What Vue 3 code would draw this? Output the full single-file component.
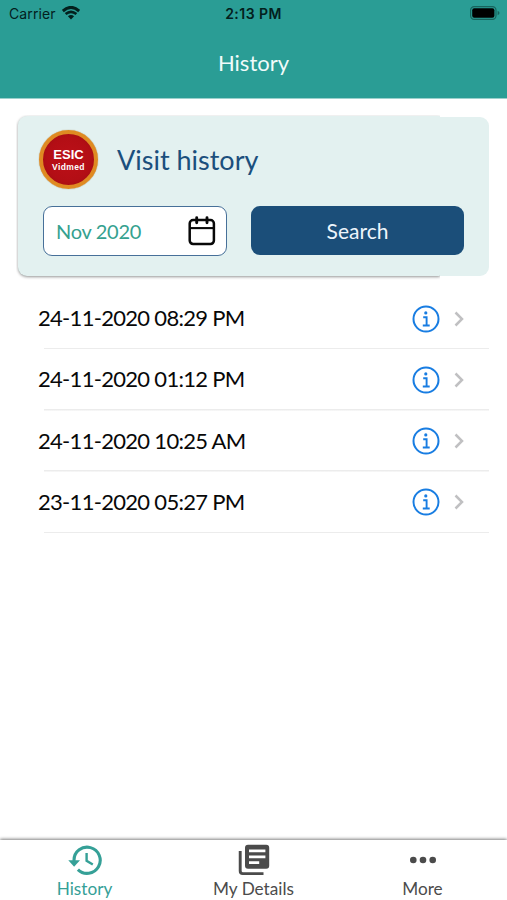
<script setup>
const visits = [
  '24-11-2020 08:29 PM',
  '24-11-2020 01:12 PM',
  '24-11-2020 10:25 AM',
  '23-11-2020 05:27 PM',
]
</script>

<template>
  <div class="screen">
    <header class="top">
      <div class="status">
        <div class="carrier">
          <span>Carrier</span>
          <svg class="wifi" viewBox="0 0 18 14" width="18" height="14">
            <path d="M0.8 5Q9-2.2 17.2 5" fill="none" stroke="#03201d" stroke-width="3" />
            <path d="M3.6 8.1Q9 3.7 14.4 8.1" fill="none" stroke="#03201d" stroke-width="2.6" />
            <path d="M5.9 10.3Q9 7.8 12.1 10.3L9 13.6Z" fill="#03201d" />
          </svg>
        </div>
        <span class="clock">2:13 PM</span>
        <div class="power">
          <svg viewBox="0 0 31 14" width="31" height="14">
            <rect x="0.6" y="0.6" width="25.4" height="12.8" rx="3.6" fill="none" stroke="#17645d" stroke-width="1.2" />
            <rect x="2.2" y="2.2" width="22.2" height="9.6" rx="2" fill="#000" />
            <path d="M27.6 4.7Q29.5 5.5 29.5 7T27.6 9.3Z" fill="#17645d" />
          </svg>
        </div>
      </div>
      <h1>History</h1>
    </header>

    <main>
      <section class="card">
        <div class="heading">
          <div class="logo">
            <span class="esic">ESIC</span>
            <span class="vidmed">Vidmed</span>
          </div>
          <h2>Visit history</h2>
        </div>
        <div class="controls">
          <div class="month">
            <span>Nov 2020</span>
            <svg viewBox="0 0 28 30" width="28" height="30" fill="none" stroke="#080808" stroke-linecap="round">
              <rect x="1.7" y="4.1" width="24.2" height="23.9" rx="3.4" stroke-width="2.5" />
              <path d="M2 12.1H25.6" stroke-width="2.1" stroke-linecap="butt" />
              <path d="M8.7 1.8V6.8M19 1.8V6.8" stroke-width="2.9" />
            </svg>
          </div>
          <button>Search</button>
        </div>
      </section>

      <ul>
        <li v-for="visit in visits" :key="visit">
          <span class="date">{{ visit }}</span>
          <svg class="info" viewBox="0 0 28 28" width="28" height="28" fill="none" stroke="#187de2">
            <circle cx="14" cy="14" r="12.5" stroke-width="2" />
            <circle cx="13.8" cy="7.9" r="1.6" fill="#187de2" stroke="none" />
            <path d="M11.2 12.2H14.6V20.3M10.8 20.5H17.7" stroke-width="1.9" />
          </svg>
          <svg class="chevron" viewBox="0 0 10 16" width="10" height="16">
            <path d="M1.5 1.5L8 8L1.5 14.5" fill="none" stroke="#c0c0c2" stroke-width="2.5" />
          </svg>
        </li>
      </ul>
    </main>

    <nav>
      <a class="active">
        <svg viewBox="0 0 34 32" width="34" height="32">
          <path d="M6 17.5V16.2A13.1 13.1 0 1 1 9.9 25.6" fill="none" stroke="currentColor" stroke-width="3.1" />
          <path d="M0.3 16.2H12L6.1 22.8Z" fill="currentColor" />
          <path d="M18.6 9V16.8L24.8 20.5" fill="none" stroke="currentColor" stroke-width="2.4" />
        </svg>
        <span>History</span>
      </a>
      <a>
        <svg viewBox="0 0 34 32" width="34" height="32">
          <path fill="#4b4b4b" fill-rule="evenodd" d="M11 0.8H29.2Q32.2 0.8 32.2 3.8V21.8Q32.2 24.8 29.2 24.8H11Q8 24.8 8 21.8V3.8Q8 0.8 11 0.8ZM12 5.6V8.3H28.4V5.6ZM12 11.5V14.2H28.4V11.5ZM12 17.2V19.9H22.2V17.2Z" />
          <path d="M3.2 7V27.1Q3.2 29.6 5.7 29.6H26.5" fill="none" stroke="#4b4b4b" stroke-width="2.9" />
        </svg>
        <span>My Details</span>
      </a>
      <a>
        <svg viewBox="0 0 34 32" width="34" height="32" fill="#4b4b4b">
          <circle cx="7.3" cy="16" r="3.3" />
          <circle cx="17" cy="16" r="3.3" />
          <circle cx="26.7" cy="16" r="3.3" />
        </svg>
        <span>More</span>
      </a>
    </nav>
  </div>
</template>

<style>
body {
  margin: 0;
  background: #fff;
}
</style>

<style scoped>
.screen {
  display: flex;
  flex-direction: column;
  width: 507px;
  height: 900px;
  overflow: hidden;
  box-sizing: border-box;
  background: #fff;
  font-family: Lato, sans-serif;
}
.top {
  flex: none;
  height: 99px;
  background: #2a9d95;
  border-bottom: 1px solid #9bd0cc;
  box-sizing: border-box;
}
.status {
  display: grid;
  grid-template-columns: 1fr auto 1fr;
  align-items: center;
  height: 28px;
  padding: 0 6px;
  font: 14px/28px Inter, sans-serif;
  color: #03201d;
}
.carrier {
  display: flex;
  align-items: center;
  gap: 6px;
  padding-left: 3px;
}
.carrier span {
  letter-spacing: 0.1px;
}
.wifi {
  margin-top: -2px;
}
.clock {
  font-weight: 600;
  font-size: 14px;
  letter-spacing: 0.45px;
}
.power {
  display: flex;
  justify-content: flex-end;
  margin-top: -2px;
}
h1 {
  margin: 0;
  padding-top: 20px;
  font-size: 22px;
  line-height: 30px;
  font-weight: 400;
  text-align: center;
  color: #f0fbfa;
}
main {
  flex: 1;
  padding: 18px 18px 0;
}
.card {
  position: relative;
  z-index: 0;
  height: 159px;
  box-sizing: border-box;
  padding: 13px 25px 0 20px;
  border-radius: 9px;
  background: #e3f1f0;
}
.card::before {
  content: '';
  position: absolute;
  z-index: -1;
  inset: -1px 49px 0 0;
  border-radius: 9px 1px 1px 9px;
  background: #e3f1f0;
  box-shadow: 0 1px 3px rgba(0, 0, 0, 0.42);
  clip-path: inset(-1px 0 -5px -2px);
}
.heading {
  display: flex;
  align-items: center;
  height: 60px;
}
.logo {
  display: flex;
  flex-direction: column;
  align-items: center;
  box-sizing: border-box;
  width: 59px;
  height: 59px;
  margin: -1px 0 0 1px;
  padding-top: 14px;
  border: 4px solid #df8a22;
  border-radius: 50%;
  background: radial-gradient(circle, #bd1018 0%, #b30e15 60%, #960d12 100%);
  box-shadow: 0 0 1px #90723a;
  font-family: "Liberation Sans", sans-serif;
  font-weight: 700;
  color: #fff;
}
.esic {
  font-size: 13px;
  line-height: 14px;
}
.vidmed {
  font-size: 8.5px;
  line-height: 10px;
  letter-spacing: 0.4px;
}
h2 {
  margin: 0 0 0 19px;
  font-size: 27px;
  line-height: 32px;
  font-weight: 400;
  color: #1b4f7d;
}
.controls {
  display: flex;
  justify-content: space-between;
  margin: 16px 0 0 5px;
}
.month {
  display: flex;
  justify-content: space-between;
  align-items: center;
  box-sizing: border-box;
  width: 184px;
  height: 50px;
  padding: 0 10px 0 12px;
  border: 1.5px solid #477099;
  border-radius: 9px;
  background: #fff;
  font-size: 20px;
  letter-spacing: -0.3px;
  color: #35a18f;
}
button {
  width: 213px;
  height: 49px;
  padding: 0;
  border: 0;
  border-radius: 9px;
  background: #1b4e79;
  font: 21px Lato, sans-serif;
  color: #edf5fc;
}
ul {
  margin: 12px 0 0;
  padding: 0;
  list-style: none;
}
li {
  display: flex;
  align-items: center;
  height: 61.25px;
  box-sizing: border-box;
  padding: 0 25px 0 20px;
  background: linear-gradient(#ececec, #ececec) 26px 100% / calc(100% - 26px) 1.5px no-repeat;
}
.date {
  flex: 1;
  padding-bottom: 0.8px;
  font-size: 22px;
  line-height: 26px;
  letter-spacing: -0.7px;
  color: #080808;
}
.chevron {
  margin-left: 14px;
}
nav {
  position: relative;
  flex: none;
  display: grid;
  grid-template-columns: repeat(3, 1fr);
  height: 60px;
  background: #fff;
  box-shadow: 0 -1px 3px rgba(0, 0, 0, 0.5);
}
nav a {
  display: flex;
  flex-direction: column;
  align-items: center;
  padding-top: 4px;
  color: #4b4b4b;
  font-size: 17.2px;
  line-height: 24px;
}
nav a.active {
  color: #35a097;
}
nav a span {
  margin-top: 1px;
}
</style>
